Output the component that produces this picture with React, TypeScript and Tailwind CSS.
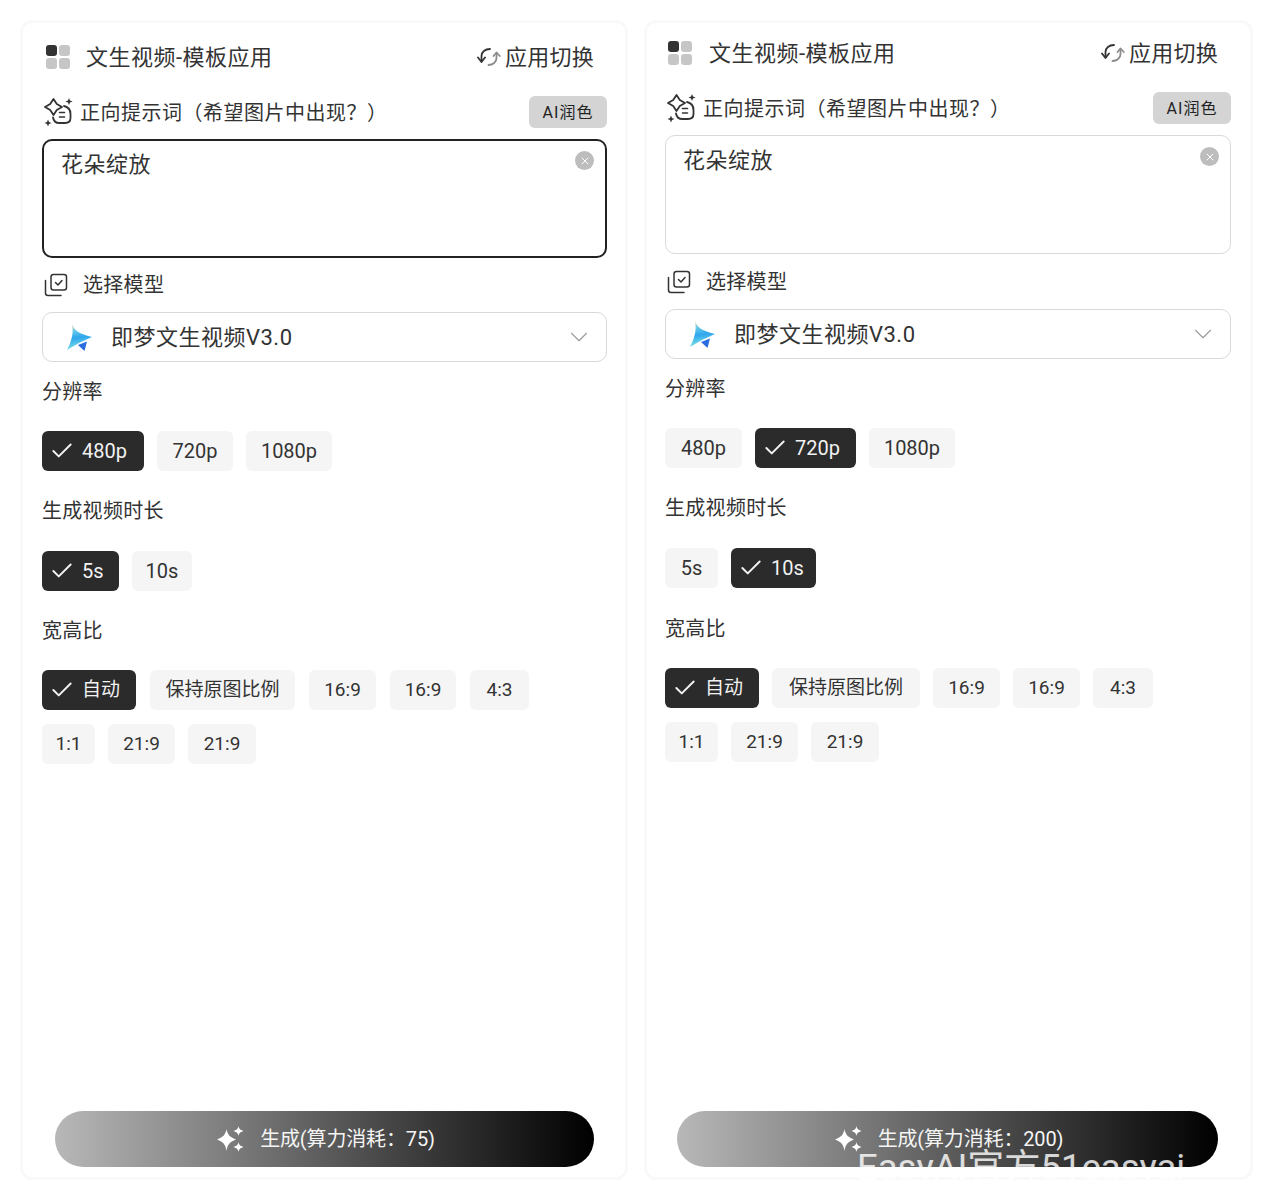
import React from "react";
import { Check, ChevronDown, X } from "lucide-react";

const GridIcon = () => (
  <svg width="26" height="26" viewBox="0 0 26 26" className="shrink-0">
    <rect x="1" y="1" width="11" height="11" rx="3" fill="#333333" />
    <rect x="14" y="1" width="11" height="11" rx="3" fill="#c6c6c6" />
    <rect x="1" y="14" width="11" height="11" rx="3" fill="#c6c6c6" />
    <rect x="14" y="14" width="11" height="11" rx="3" fill="#c6c6c6" />
  </svg>
);

const SwitchIcon = () => (
  <svg width="24" height="20" viewBox="0 0 24 20" fill="none" strokeWidth="1.8" strokeLinecap="round" strokeLinejoin="round" className="shrink-0">
    <path d="M4.5 14 V9 C4.5 5 8 2 13 2" stroke="#333333" />
    <path d="M1 10.5 L4.5 15 L8 10.5" stroke="#333333" />
    <path d="M19.5 6 V11 C19.5 15 16 18 11.5 18" stroke="#8c8c8c" />
    <path d="M16.5 9 L19.5 5.5 L22.8 9" stroke="#8c8c8c" />
  </svg>
);

const PromptIcon = () => (
  <svg width="29" height="30" viewBox="0 0 29 30" fill="none" className="shrink-0">
    <path d="M9.5 2 L12.8 7 L18 10 L12.8 13 L9.5 18 L6.2 13 L1 10 L6.2 7 Z" stroke="#333333" strokeWidth="1.8" strokeLinejoin="round" />
    <path d="M20 9 C24.5 10 26.5 13 26.5 17 V21 C26.5 24.5 24.5 26 21 26 H15.5 C12 26 9.5 24 9 20.5" stroke="#333333" strokeWidth="1.8" strokeLinecap="round" />
    <path d="M15.5 15.5 H20.5 M15.5 20 H20.5" stroke="#333333" strokeWidth="1.6" strokeLinecap="round" />
    <path d="M25 1 L26 3.6 L28.6 4.5 L26 5.4 L25 8 L24 5.4 L21.4 4.5 L24 3.6 Z" fill="#333333" />
    <path d="M4 22.5 L5 25 L7.5 26 L5 27 L4 29.5 L3 27 L.5 26 L3 25 Z" fill="#333333" />
  </svg>
);

const ModelIcon = () => (
  <svg width="24" height="24" viewBox="0 0 24 24" fill="none" stroke="#333333" strokeWidth="1.5" strokeLinecap="round" strokeLinejoin="round" className="shrink-0">
    <rect x="7" y="1.5" width="15.5" height="15.5" rx="2.5" />
    <path d="M11.5 9.5 L14 12 L18 7.5" />
    <path d="M1.5 7.5 V20 C1.5 21.5 2.5 22.5 4 22.5 H17" />
  </svg>
);

const LogoIcon = ({ id }: { id: string }) => (
  <svg width="27" height="29" viewBox="0 0 27 29" className="shrink-0">
    <defs>
      <linearGradient id={id} x1="0.2" y1="0" x2="0.35" y2="1">
        <stop offset="0" stopColor="#f0cf8a" />
        <stop offset="0.25" stopColor="#6ccbe8" />
        <stop offset="0.55" stopColor="#2fa6ee" />
        <stop offset="1" stopColor="#86e8e4" />
      </linearGradient>
    </defs>
    <path d="M6 1 C8 7 12 10.5 26 14 L13 20 L1 27 C5 19 8 11 6 1 Z" fill={`url(#${id})`} />
    <path d="M12 22 L21 18.5 L18.5 28 Z" fill="#2a6de0" />
  </svg>
);

const SparkIcon = () => (
  <svg width="28" height="28" viewBox="0 0 28 28" fill="#ffffff" className="shrink-0">
    <path d="M9.5 4 C10.5 9.5 12.5 12 19 14.5 C12.5 17 10.5 19.5 9.5 26 C8.5 19.5 6.5 17 0 14.5 C6.5 12 8.5 9.5 9.5 4 Z" />
    <path d="M21.5 1 C22 3.8 23 4.8 26.5 6 C23 7.2 22 8.2 21.5 11 C21 8.2 20 7.2 16.5 6 C20 4.8 21 3.8 21.5 1 Z" />
    <path d="M21.5 17 C22 19.8 23 20.8 26.5 22 C23 23.2 22 24.2 21.5 27 C21 24.2 20 23.2 16.5 22 C20 20.8 21 19.8 21.5 17 Z" />
  </svg>
);

function Chip({ label, active, className }: { label: string; active?: boolean; className: string }) {
  return active ? (
    <div className={`h-10 rounded-md bg-[#2b2b2b] text-[#f2f2f2] flex items-center pl-[7px] gap-[7px] ${className}`}>
      <Check size={26} strokeWidth={1.8} className="shrink-0" />
      <span>{label}</span>
    </div>
  ) : (
    <div className={`h-10 rounded-md bg-[#f5f5f5] text-[#333333] flex items-center justify-center ${className}`}>
      {label}
    </div>
  );
}

function Label({ children, className }: { children: React.ReactNode; className: string }) {
  return <div className={`h-[30px] flex items-center text-[20px] tracking-[0.3px] text-[#333333] ${className}`}>{children}</div>;
}

function Panel({ right, logoId }: { right?: boolean; logoId: string }) {
  return (
    <div
      className={`h-[1160px] rounded-xl bg-white border-[3px] border-[#f9f9f9] flex flex-col ${
        right ? "w-[609px] pt-[12px] pl-[18px] pr-[19px]" : "w-[608px] pt-[16px] pl-[19px] pr-[18px]"
      }`}
    >
      <div className={`h-9 flex items-center justify-between pr-[13px] ${right ? "pl-[2px]" : "pl-[3px]"}`}>
        <div className={`flex items-center text-[22px] tracking-[0.5px] text-[#333333] ${right ? "gap-[16px]" : "gap-[15px]"}`}>
          <GridIcon />
          <span>文生视频-模板应用</span>
        </div>
        <div className="flex items-center gap-[4px] text-[22px] tracking-[0.25px] text-[#333333]">
          <SwitchIcon />
          <span>应用切换</span>
        </div>
      </div>

      <div className="mt-[22px] h-[30px] flex items-center justify-between">
        <div className="flex items-center gap-[7px] pl-[2px] text-[20px] tracking-[0.5px] text-[#333333]">
          <PromptIcon />
          <span className="pt-[1px]">正向提示词（希望图片中出现？）</span>
        </div>
        <div className="h-8 w-[78px] pt-[1px] rounded-md bg-[#d4d4d4] text-[#222222] text-[16px] tracking-[1px] flex items-center justify-center">
          AI润色
        </div>
      </div>

      <div
        className={`mt-[12px] h-[119px] rounded-[10px] bg-white flex justify-between ${
          right ? "border border-[#d9d9d9] pl-[17px] pr-[11px] pt-[8px]" : "border-2 border-[#222222] pl-[17px] pr-[11px] pt-[7px]"
        }`}
      >
        <span className="text-[22px] tracking-[0.5px] text-[#333333]">花朵绽放</span>
        <div className="mt-[3px] w-[19px] h-[19px] rounded-full bg-[#bdbdbd] flex items-center justify-center">
          <X size={12} strokeWidth={2} color="#ffffff" />
        </div>
      </div>

      <Label className={`gap-[15px] pl-[2px] ${right ? "mt-[13px]" : "mt-[12px]"}`}>
        <ModelIcon />
        <span>选择模型</span>
      </Label>

      <div className="mt-[12px] h-[50px] rounded-[10px] border border-[#d9d9d9] bg-white flex items-center justify-between pl-[23px] pr-[12px]">
        <div className="flex items-center gap-[18px] text-[22px] tracking-[0.5px] text-[#333333]">
          <LogoIcon id={logoId} />
          <span>即梦文生视频V3.0</span>
        </div>
        <ChevronDown size={30} strokeWidth={0.9} color="#9a9a9a" />
      </div>

      <Label className="mt-[15px]">分辨率</Label>
      <div className="mt-[24px] flex gap-[13px] text-[20px]">
        <Chip label="480p" active={!right} className={right ? "w-[77px]" : "w-[102px]"} />
        <Chip label="720p" active={right} className={right ? "w-[101px]" : "w-[76px]"} />
        <Chip label="1080p" className="w-[86px]" />
      </div>

      <Label className="mt-[25px]">生成视频时长</Label>
      <div className="mt-[25px] flex gap-[13px] text-[20px]">
        <Chip label="5s" active={!right} className={right ? "w-[53px]" : "w-[77px]"} />
        <Chip label="10s" active={right} className={right ? "w-[85px]" : "w-[60px]"} />
      </div>

      <Label className={right ? "mt-[26px]" : "mt-[25px]"}>宽高比</Label>
      <div className="flex flex-col gap-[14px] mt-[24px] text-[19px]">
        <div className={`flex ${right ? "gap-[13px]" : "gap-[14px]"}`}>
          <Chip label="自动" active className="w-[94px]" />
          <Chip label="保持原图比例" className={right ? "w-[148px]" : "w-[145px]"} />
          <Chip label="16:9" className="w-[67px]" />
          <Chip label="16:9" className={right ? "w-[67px]" : "w-[66px]"} />
          <Chip label="4:3" className={right ? "w-[60px]" : "w-[59px]"} />
        </div>
        <div className="flex gap-[13px]">
          <Chip label="1:1" className="w-[53px]" />
          <Chip label="21:9" className="w-[67px]" />
          <Chip label="21:9" className="w-[68px]" />
        </div>
      </div>

      <div
        className={`mt-auto mb-[10px] h-14 pl-[3px] rounded-[28px] bg-linear-to-r/srgb from-[#b8b8b8] to-[#000000] text-[#f4f4f4] text-[20px] tracking-[-0.15px] flex items-center justify-center gap-[15px] ${
          right ? "ml-[12px] mr-[13px]" : "mx-[13px]"
        }`}
      >
        <SparkIcon />
        <span>{right ? "生成(算力消耗：200)" : "生成(算力消耗：75)"}</span>
      </div>
    </div>
  );
}

export default function App() {
  return (
    <div className="relative w-[1275px] h-[1200px] overflow-hidden bg-white flex gap-[16px] pt-[20px] pl-[20px] font-['Roboto','Noto_Sans_CJK_SC',sans-serif]">
      <Panel logoId="logo-left" />
      <Panel right logoId="logo-right" />
      <div className="absolute left-[857px] top-[1149px] text-[36.5px] leading-[37px] whitespace-nowrap text-white/80">
        EasyAI官方51easyai
      </div>
    </div>
  );
}
